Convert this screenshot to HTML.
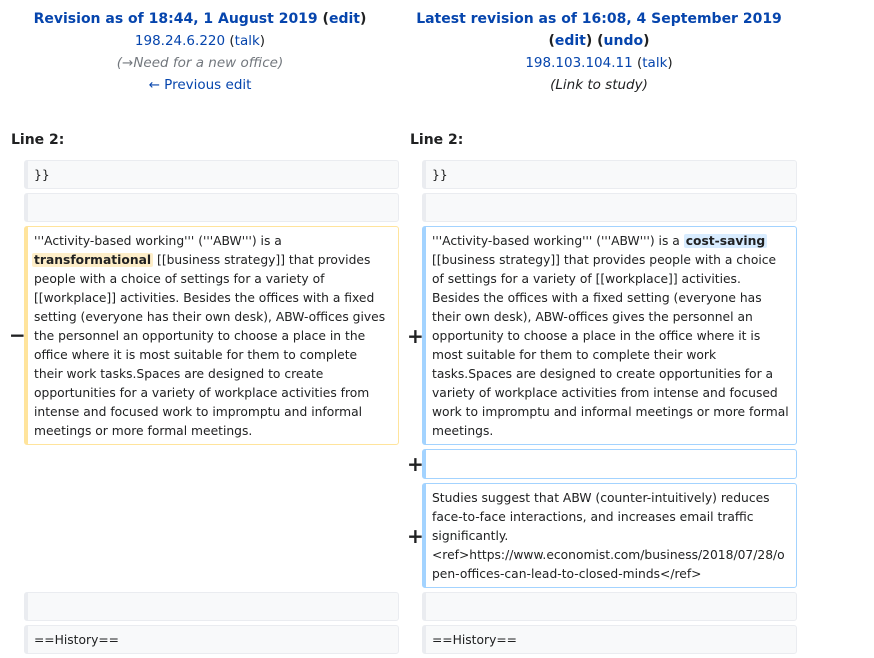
<!DOCTYPE html>
<html><head><meta charset="utf-8"><style>
body{margin:0;background:#fff;width:874px;height:658px;position:relative;overflow:hidden;font-family:"DejaVu Sans","Liberation Sans",sans-serif;color:#202122}
.a{position:absolute}
.h{font-size:13.5px;text-align:center;width:400px;line-height:22px}
.h a{color:#0645ad;text-decoration:none}
.b{font-weight:bold;font-size:14px}
.box{position:absolute;box-sizing:border-box;border:1px solid #eaecf0;border-left:4px solid #eaecf0;background:#f8f9fa;border-radius:3px;font-size:12.3px;line-height:19px;padding:5px 0 0 6px;white-space:nowrap}
.del{border-color:#ffe49c;background:#fff}
.add{border-color:#a3d3ff;background:#fff}
.hd{background:#feeec8;font-weight:bold;border-radius:2px;padding:0 2px;margin-left:-2px}
.ha{background:#d8ecff;font-weight:bold;border-radius:2px;padding:0 2px}
.m{position:absolute;font-size:20px;font-weight:bold;line-height:20px}
.ln{position:absolute;font-size:14px;font-weight:bold}
</style></head><body>
<div class="a h" style="left:0;top:8px">
<span class="b"><a href="#">Revision as of 18:44, 1 August 2019</a> (<a href="#">edit</a>)</span><br>
<a href="#">198.24.6.220</a> (<a href="#">talk</a>)<br>
<i style="color:#72777d">(→Need for a new office)</i><br>
<a href="#">← Previous edit</a>
</div>
<div class="a h" style="left:399px;top:8px">
<span class="b"><a href="#">Latest revision as of 16:08, 4 September 2019</a></span><br>
<span class="b">(<a href="#">edit</a>) (<a href="#">undo</a>)</span><br>
<a href="#">198.103.104.11</a> (<a href="#">talk</a>)<br>
<i>(Link to study)</i>
</div>
<div class="ln" style="left:11px;top:132px">Line 2:</div>
<div class="ln" style="left:410px;top:132px">Line 2:</div>

<div class="box" style="left:24px;top:160px;width:375px;height:29px">}}</div>
<div class="box" style="left:24px;top:193px;width:375px;height:29px"></div>
<div class="box del" style="left:24px;top:226px;width:375px;height:219px">'''Activity-based working''' ('''ABW''') is a<br><span class="hd">transformational</span> [[business strategy]] that provides<br>people with a choice of settings for a variety of<br>[[workplace]] activities. Besides the offices with a fixed<br>setting (everyone has their own desk), ABW-offices gives<br>the personnel an opportunity to choose a place in the<br>office where it is most suitable for them to complete<br>their work tasks.Spaces are designed to create<br>opportunities for a variety of workplace activities from<br>intense and focused work to impromptu and informal<br>meetings or more formal meetings.</div>
<div class="m" style="left:9px;top:325px">−</div>
<div class="box" style="left:24px;top:592px;width:375px;height:29px"></div>
<div class="box" style="left:24px;top:625px;width:375px;height:29px">==History==</div>

<div class="box" style="left:422px;top:160px;width:375px;height:29px">}}</div>
<div class="box" style="left:422px;top:193px;width:375px;height:29px"></div>
<div class="box add" style="left:422px;top:226px;width:375px;height:219px">'''Activity-based working''' ('''ABW''') is a <span class="ha">cost-saving</span><br>[[business strategy]] that provides people with a choice<br>of settings for a variety of [[workplace]] activities.<br>Besides the offices with a fixed setting (everyone has<br>their own desk), ABW-offices gives the personnel an<br>opportunity to choose a place in the office where it is<br>most suitable for them to complete their work<br>tasks.Spaces are designed to create opportunities for a<br>variety of workplace activities from intense and focused<br>work to impromptu and informal meetings or more formal<br>meetings.</div>
<div class="m" style="left:407px;top:326px">+</div>
<div class="box add" style="left:422px;top:449px;width:375px;height:30px"></div>
<div class="m" style="left:407px;top:454px">+</div>
<div class="box add" style="left:422px;top:483px;width:375px;height:105px">Studies suggest that ABW (counter-intuitively) reduces<br>face-to-face interactions, and increases email traffic<br>significantly.<br>&lt;ref&gt;https://www.economist.com/business/2018/07/28/o<br>pen-offices-can-lead-to-closed-minds&lt;/ref&gt;</div>
<div class="m" style="left:407px;top:526px">+</div>
<div class="box" style="left:422px;top:592px;width:375px;height:29px"></div>
<div class="box" style="left:422px;top:625px;width:375px;height:29px">==History==</div>
</body></html>
